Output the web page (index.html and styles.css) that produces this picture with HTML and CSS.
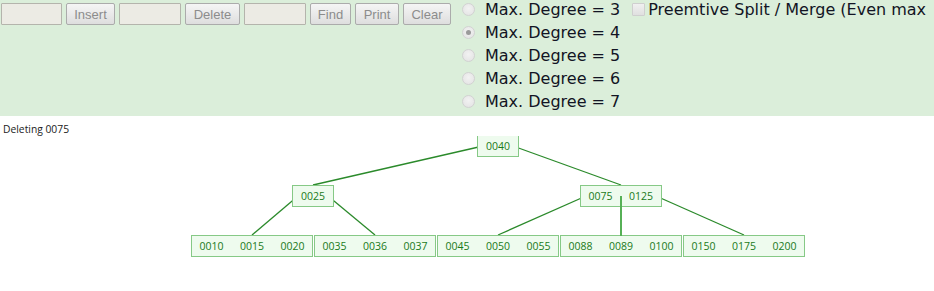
FILE: index.html
```html
<!DOCTYPE html>
<html lang="en">
<head>
    <meta charset="UTF-8">
    <title>B-Tree Visualization</title>
    <link rel="stylesheet" href="styles.css">
</head>
<body>
    <div class="controls">
        <div class="actions">
            <input class="field" type="text" disabled>
            <button class="btn btn-insert" disabled>Insert</button>
            <input class="field" type="text" disabled>
            <button class="btn btn-delete" disabled>Delete</button>
            <input class="field" type="text" disabled>
            <button class="btn btn-find" disabled>Find</button>
            <button class="btn btn-print" disabled>Print</button>
            <button class="btn btn-clear" disabled>Clear</button>
        </div>
        <div class="degrees">
            <label class="degree"><input type="radio" name="deg" disabled> Max. Degree = 3</label>
            <label class="degree"><input type="radio" name="deg" checked disabled> Max. Degree = 4</label>
            <label class="degree"><input type="radio" name="deg" disabled> Max. Degree = 5</label>
            <label class="degree"><input type="radio" name="deg" disabled> Max. Degree = 6</label>
            <label class="degree"><input type="radio" name="deg" disabled> Max. Degree = 7</label>
        </div>
        <label class="preemptive"><input type="checkbox" disabled>Preemtive Split / Merge (Even max</label>
    </div>

    <div class="canvas">
        <div class="message">Deleting 0075</div>
        <svg class="tree" width="934" height="155" viewBox="0 136 934 155">
            <g class="edges">
                <line x1="483" y1="146" x2="313" y2="185"/>
                <line x1="513" y1="146" x2="621" y2="185"/>
                <line x1="298" y1="196" x2="252" y2="235"/>
                <line x1="328" y1="196" x2="375" y2="235"/>
                <line x1="586" y1="196" x2="498" y2="235"/>
                <line x1="656" y1="196" x2="744" y2="235"/>
            </g>
            <g class="nodes">
                <rect x="477.5" y="135.5" width="41" height="21"/>
                <rect x="292.5" y="185.5" width="41" height="21"/>
                <rect x="580.5" y="185.5" width="81" height="21"/>
                <rect x="191.5" y="235.5" width="121" height="21"/>
                <rect x="314.5" y="235.5" width="121" height="21"/>
                <rect x="437.5" y="235.5" width="121" height="21"/>
                <rect x="560.5" y="235.5" width="121" height="21"/>
                <rect x="683.5" y="235.5" width="121" height="21"/>
            </g>
            <line class="mid-edge" x1="621" y1="196" x2="621" y2="236"/>
            <g class="keys">
                <text x="498" y="149.5">0040</text>
                <text x="313" y="199.5">0025</text>
                <text x="600.5" y="199.5">0075</text>
                <text x="641" y="199.5">0125</text>

                <text x="211.5" y="249.5">0010</text>
                <text x="252" y="249.5">0015</text>
                <text x="292.5" y="249.5">0020</text>

                <text x="334.5" y="249.5">0035</text>
                <text x="375" y="249.5">0036</text>
                <text x="415.5" y="249.5">0037</text>

                <text x="457.5" y="249.5">0045</text>
                <text x="498" y="249.5">0050</text>
                <text x="538.5" y="249.5">0055</text>

                <text x="580.5" y="249.5">0088</text>
                <text x="621" y="249.5">0089</text>
                <text x="661.5" y="249.5">0100</text>

                <text x="703.5" y="249.5">0150</text>
                <text x="744" y="249.5">0175</text>
                <text x="784.5" y="249.5">0200</text>
            </g>
        </svg>
    </div>
</body>
</html>
```

FILE: styles.css
```css
body {
    margin: 0;
    overflow: hidden;
    background: #fff;
    font-family: "DejaVu Sans", Verdana, sans-serif;
}
.controls {
    display: flex;
    height: 116px;
    background-color: #dbeeda;
    white-space: nowrap;
}
.actions {
    display: flex;
    align-items: flex-start;
    gap: 4px;
    padding: 3px 0 0 1px;
}
.field {
    box-sizing: border-box;
    width: 61px;
    height: 22px;
    margin: 0;
    background: #ecebe4;
    border: 1px solid #b4b4ac;
    border-radius: 1px;
}
.actions .field + .btn + .field {
    width: 62px;
}
.btn {
    box-sizing: border-box;
    height: 22px;
    margin: 0;
    padding: 0;
    font: 13px "Liberation Sans", Arial, sans-serif;
    color: #8c8c8c;
    background: linear-gradient(#f5f5f5, #dedede);
    border: 1px solid #ababab;
    border-radius: 2px;
}
.btn-insert { width: 49px; }
.btn-delete { width: 55px; }
.btn-find { width: 41px; }
.btn-print { width: 44px; }
.btn-clear { width: 48px; }
.degrees {
    display: flex;
    flex-direction: column;
    margin: -2px 0 0 7px;
}
.degree {
    display: flex;
    align-items: center;
    height: 23px;
    font-size: 16px;
    color: #121424;
}
.degree input {
    appearance: none;
    box-sizing: border-box;
    width: 13px;
    height: 13px;
    margin: 0 10px 0 4px;
    border: 1px solid #d2d2d2;
    border-radius: 50%;
    background: radial-gradient(circle at 50% 40%, #f2f2f2, #e2e2e2);
    display: grid;
    place-items: center;
}
.degree input:checked::after {
    content: "";
    width: 5px;
    height: 5px;
    border-radius: 50%;
    background: #9a9a9a;
}
.preemptive {
    display: flex;
    align-items: center;
    height: 23px;
    margin: -2px 0 0 0;
    font-size: 16px;
    color: #121424;
}
.preemptive input {
    appearance: none;
    box-sizing: border-box;
    width: 13px;
    height: 13px;
    margin: 0 3px 0 12px;
    border: 1px solid #cfcfcf;
    border-radius: 1px;
    background: linear-gradient(#f0f0f0, #e0e0e0);
}
.canvas {
    background: #fff;
}
.message {
    height: 14px;
    padding: 6px 0 0 3px;
    font: 10.3px/14px "Open Sans", sans-serif;
    color: #222;
}
.tree {
    display: block;
}
.edges line {
    stroke: #2b8a2b;
    stroke-width: 1.3;
}
.nodes rect {
    fill: #eefbee;
    stroke: #86c986;
    stroke-width: 1;
}
.mid-edge {
    stroke: #56b056;
    stroke-width: 2;
}
.keys text {
    font: 10.5px "Open Sans", sans-serif;
    fill: #1a7a1a;
    text-anchor: middle;
}
```
